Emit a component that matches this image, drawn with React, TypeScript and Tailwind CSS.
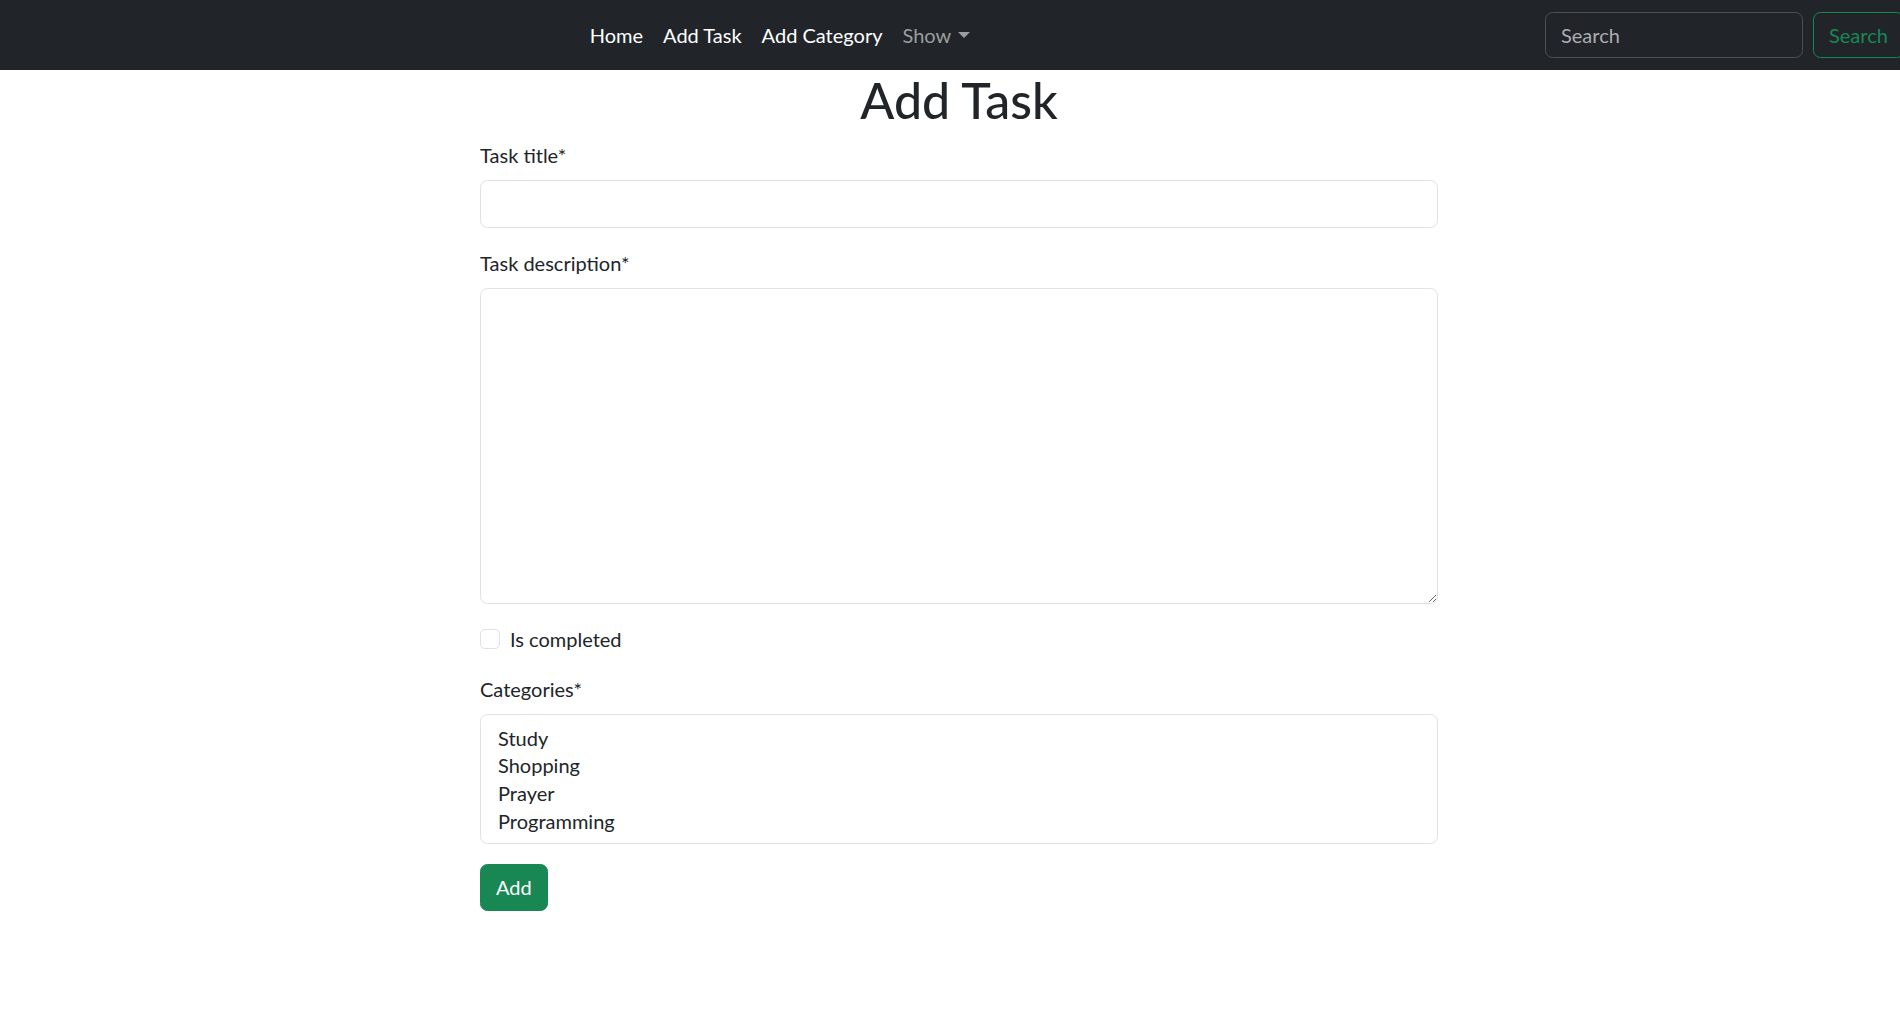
import React from "react";

const font = { fontFamily: "Lato, 'Noto Sans', sans-serif" };

function NavLink({ children, active = true }: { children: React.ReactNode; active?: boolean }) {
  return (
    <li>
      <a
        href="#"
        className={
          active
            ? "block px-[10px] py-[10px] text-[20px] leading-[30px] text-white no-underline"
            : "flex items-center px-[10px] py-[10px] text-[20px] leading-[30px] text-[#9b9d9f] no-underline"
        }
      >
        {children}
      </a>
    </li>
  );
}

export default function App() {
  return (
    <div className="min-h-screen w-full overflow-hidden bg-white text-[#212529]" style={font}>
      <nav className="h-[70px] w-full overflow-hidden bg-[#212529]">
        <div className="flex h-full items-center px-[15px]">
          <ul className="mx-auto flex list-none items-center p-0 m-0">
            <NavLink>Home</NavLink>
            <NavLink>Add Task</NavLink>
            <NavLink>Add Category</NavLink>
            <NavLink active={false}>
              Show
              <span className="ml-[7px] inline-block h-0 w-0 border-x-[6px] border-t-[6px] border-x-transparent border-t-[#9b9d9f]" />
            </NavLink>
          </ul>
          <form className="flex w-[340px] shrink-0 items-center" onSubmit={(e) => e.preventDefault()}>
            <input
              type="search"
              placeholder="Search"
              className="h-[46px] w-[258px] shrink-0 rounded-[7.5px] border-[1.25px] border-[#495057] bg-[#212529] px-[15px] text-[20px] text-[#dee2e6] outline-none placeholder:text-[#a9adb1]"
              style={font}
            />
            <button
              type="submit"
              className="ml-[10px] h-[46px] shrink-0 rounded-[7.5px] border-[1.25px] border-[#198754] bg-transparent px-[15px] text-[20px] leading-[30px] text-[#198754]"
              style={font}
            >
              Search
            </button>
          </form>
        </div>
      </nav>

      <div className="ml-[480px] w-[958px]">
        <h1 className="mb-[10px] text-center text-[50px] font-medium leading-[60px]">Add Task</h1>

        <div className="mb-[20px]">
          <label className="mb-[10px] block text-[20px] leading-[30px]">Task title*</label>
          <input
            type="text"
            className="block h-[47.5px] w-full rounded-[7.5px] border-[1.25px] border-[#dee2e6] bg-white px-[15px] text-[20px] outline-none"
            style={font}
          />
        </div>

        <div className="mb-[20px]">
          <label className="mb-[10px] block text-[20px] leading-[30px]">Task description*</label>
          <textarea
            className="block h-[316px] w-full resize-y rounded-[7.5px] border-[1.25px] border-[#dee2e6] bg-white px-[15px] py-[7.5px] text-[20px] outline-none"
            style={font}
          />
        </div>

        <div className="mb-[20px] flex h-[30px] items-start">
          <span className="mt-[5px] block h-[20px] w-[20px] shrink-0 rounded-[5px] border-[1.25px] border-[#dee2e6] bg-white" />
          <span className="ml-[10px] text-[20px] leading-[30px]">Is completed</span>
        </div>

        <div className="mb-[20px]">
          <label className="mb-[10px] block text-[20px] leading-[30px]">Categories*</label>
          <div className="h-[130px] w-full rounded-[7.5px] border-[1.25px] border-[#dee2e6] bg-white px-[15px] pt-[10px] pb-[5px]">
            {["Study", "Shopping", "Prayer", "Programming"].map((c) => (
              <div key={c} className="h-[27.7px] px-[2px] text-[20px] leading-[27px]">
                {c}
              </div>
            ))}
          </div>
        </div>

        <button
          type="button"
          className="h-[47.5px] rounded-[7.5px] border-[1.25px] border-[#198754] bg-[#198754] px-[15px] text-[20px] leading-[30px] text-white"
          style={font}
        >
          Add
        </button>
      </div>
    </div>
  );
}
